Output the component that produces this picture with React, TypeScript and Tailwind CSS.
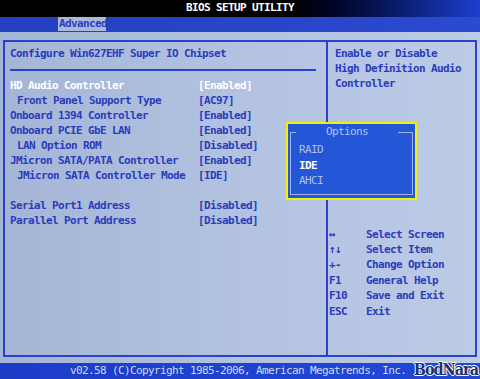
const mono = "font-['DejaVu_Sans_Mono','Liberation_Mono',monospace] text-[11px] font-bold tracking-[-0.62px] whitespace-pre";

const rows = [
  { label: "HD Audio Controller", value: "[Enabled]", indent: false, active: true },
  { label: "Front Panel Support Type", value: "[AC97]", indent: true },
  { label: "Onboard 1394 Controller", value: "[Enabled]", indent: false },
  { label: "Onboard PCIE GbE LAN", value: "[Enabled]", indent: false },
  { label: "LAN Option ROM", value: "[Disabled]", indent: true },
  { label: "JMicron SATA/PATA Controller", value: "[Enabled]", indent: false },
  { label: "JMicron SATA Controller Mode", value: "[IDE]", indent: true },
  null,
  { label: "Serial Port1 Address", value: "[Disabled]", indent: false },
  { label: "Parallel Port Address", value: "[Disabled]", indent: false },
];

const keys = [
  ["\u2194", "Select Screen"],
  ["\u2191\u2193", "Select Item"],
  ["+-", "Change Option"],
  ["F1", "General Help"],
  ["F10", "Save and Exit"],
  ["ESC", "Exit"],
];

export default function App() {
  return (
    <div className={`relative flex h-[379px] w-[480px] flex-col overflow-hidden ${mono}`}>
      {/* title bar */}
      <div className="flex h-[17px] items-center justify-center bg-gradient-to-r from-black from-55% to-[#1d3fd0] text-white">
        BIOS SETUP UTILITY
      </div>

      {/* tab row */}
      <div className="flex h-[15px] bg-gradient-to-r from-[#2440c0] to-[#2c4ad0] pl-[58px]">
        <div className="flex h-[14px] w-[48px] items-center bg-[#a9b9dc] pl-[1px] text-[#2a3cc0]">Advanced</div>
      </div>

      {/* main */}
      <div className="relative flex-1 bg-gradient-to-r from-[#a5b5d6] via-[#b2c2e0] to-[#bccbe6] px-[3px] pb-[6px] pt-[8px]">
        <div className="flex h-full border-2 border-[#2a42c8]">
          <div className="flex w-[323px] flex-col border-r-2 border-[#2a42c8] pl-[5px] pt-[4px] text-[#2a3cbc]">
            <div className="leading-[15px]">Configure Win627EHF Super IO Chipset</div>
            <div className="mr-[10px] mt-[8px] border-b-2 border-[#2a42c8]" />
            <div className="mt-[7px] flex flex-col">
              {rows.map((r, i) =>
                r ? (
                  <div key={i} className={`flex leading-[15px] ${r.active ? "text-white" : ""}`}>
                    <span className={`w-[188px] ${r.indent ? "pl-[7px]" : ""}`}>{r.label}</span>
                    <span>{r.value}</span>
                  </div>
                ) : (
                  <div key={i} className="h-[15px]" />
                )
              )}
            </div>
          </div>

          <div className="flex flex-1 flex-col pb-[36px] pt-[4px] text-[#2a3cbc]">
            <div className="pl-[7px] leading-[15px]">
              <div>Enable or Disable</div>
              <div>High Definition Audio</div>
              <div>Controller</div>
            </div>
            <div className="mt-auto flex flex-col pl-[1px]">
              {keys.map(([k, d]) => (
                <div key={k} className="flex leading-[15.4px]">
                  <span className="w-[37px]">{k}</span>
                  <span>{d}</span>
                </div>
              ))}
            </div>
          </div>
        </div>

        {/* options popup */}
        <div className="absolute left-[286px] top-[90px] h-[78px] w-[131px] border-2 border-[#f2f200] bg-[#2456d8] p-[2px]">
          <div className="relative mt-[6px] h-[63px] border border-[#9fb4ee]">
            <div className="absolute -top-[8px] left-[5px] right-[14px] flex h-[15px] items-center justify-center bg-[#2456d8] font-normal text-[#b4c4ee]">
              Options
            </div>
            <div className="flex flex-col pl-[8px] pt-[9px] leading-[15.5px]">
              <span className="font-normal text-[#b0c0ea]">RAID</span>
              <span className="text-white">IDE</span>
              <span className="font-normal text-[#b0c0ea]">AHCI</span>
            </div>
          </div>
        </div>
      </div>

      {/* footer */}
      <div className="flex h-[16px] items-center bg-gradient-to-r from-[#1c3cc8] to-[#2248d8] pl-[70px] font-normal text-[#cfd8f2]">
        v02.58 (C)Copyright 1985-2006, American Megatrends, Inc.
      </div>

      {/* watermark */}
      <div className="absolute bottom-[0px] right-[2px] font-['DejaVu_Serif_Condensed','DejaVu_Serif',serif] text-[16px] font-bold leading-[19px] tracking-[-1px] text-[#23306a] [text-shadow:1px_0_0_#fff,-1px_0_0_#fff,0_1px_0_#fff,0_-1px_0_#fff]">
        BodNara
      </div>
    </div>
  );
}
